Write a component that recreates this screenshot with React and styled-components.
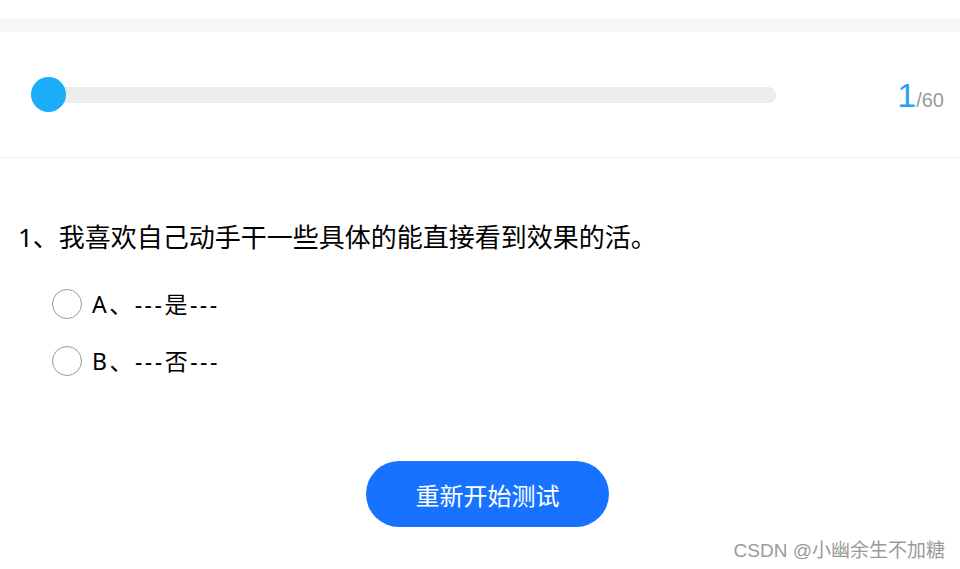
import React, { useState } from "react";
import styled, { createGlobalStyle } from "styled-components";

const GlobalStyle = createGlobalStyle`
  html, body {
    margin: 0;
    padding: 0;
    background: #fff;
    font-family: "Noto Sans", "Noto Sans CJK SC", sans-serif;
  }
`;

const Page = styled.div`
  position: relative;
  width: 960px;
  height: 569px;
  overflow: hidden;
  padding-top: 19px;
  box-sizing: border-box;
`;

const Band = styled.div`
  height: 13px;
  background-color: #f7f7f7;
`;

const ProgressBar = styled.div`
  display: flex;
  align-items: center;
  height: 126px;
  padding: 0 16px 0 31px;
  box-sizing: border-box;
  border-bottom: 1px solid #efefef;
`;

const Track = styled.div`
  position: relative;
  width: 745px;
  height: 16px;
  border-radius: 8px;
  background-color: #ececec;
`;

const Knob = styled.div`
  position: absolute;
  left: 0;
  top: 50%;
  width: 35px;
  height: 35px;
  margin-top: -17.5px;
  border-radius: 50%;
  background-color: #1cadf8;
`;

const Counter = styled.div`
  margin-left: auto;
  font-family: "Liberation Sans", Arial, sans-serif;
  color: #999;
  font-size: 20px;
  line-height: 1;
  display: flex;
  align-items: baseline;
`;

const Current = styled.span`
  color: #2b9ff4;
  font-size: 34px;
`;

const Question = styled.div`
  padding: 61px 0 0 18px;
`;

const Title = styled.div`
  font-size: 26px;
  line-height: 36px;
  color: #000;
`;

const Options = styled.div`
  display: flex;
  flex-direction: column;
  gap: 27px;
  padding: 34px 0 0 34px;
`;

const Option = styled.label`
  display: flex;
  align-items: center;
  gap: 10px;
  font-size: 23px;
  letter-spacing: 2.5px;
  line-height: 30px;
  color: #000;
  cursor: pointer;
`;

const Radio = styled.span`
  width: 30px;
  height: 30px;
  box-sizing: border-box;
  border-radius: 50%;
  border: 1px solid ${(props) => (props.checked ? "#1677ff" : "#9a9a9a")};
  background: ${(props) => (props.checked ? "#1677ff" : "#fff")};
`;

const Footer = styled.div`
  display: flex;
  justify-content: center;
  padding: 85px 0 0 15px;
`;

const Button = styled.button`
  width: 243px;
  height: 66px;
  border: none;
  border-radius: 33px;
  background-color: #1672ff;
  color: #fff;
  font-family: "Noto Sans CJK SC", sans-serif;
  font-size: 24px;
  cursor: pointer;
`;

const Watermark = styled.div`
  position: absolute;
  right: 15px;
  bottom: 7px;
  font-size: 19px;
  color: #9a9a9a;
  font-family: "Liberation Sans", "Noto Sans CJK SC", sans-serif;
`;

const options = [
  { key: "A", text: "A、---是---" },
  { key: "B", text: "B、---否---" },
];

export default function App() {
  const [answer, setAnswer] = useState(null);

  return (
    <Page>
      <GlobalStyle />
      <Band />
      <ProgressBar>
        <Track>
          <Knob />
        </Track>
        <Counter>
          <Current>1</Current>/60
        </Counter>
      </ProgressBar>
      <Question>
        <Title>1、我喜欢自己动手干一些具体的能直接看到效果的活。</Title>
        <Options>
          {options.map((o) => (
            <Option key={o.key} onClick={() => setAnswer(o.key)}>
              <Radio checked={answer === o.key} />
              {o.text}
            </Option>
          ))}
        </Options>
      </Question>
      <Footer>
        <Button onClick={() => setAnswer(null)}>重新开始测试</Button>
      </Footer>
      <Watermark>CSDN @小幽余生不加糖</Watermark>
    </Page>
  );
}
